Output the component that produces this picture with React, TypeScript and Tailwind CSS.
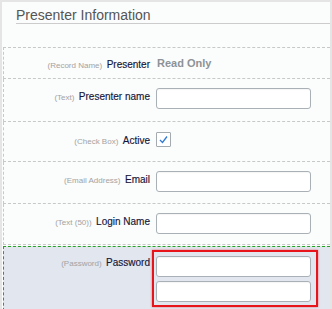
const font = { fontFamily: '"Liberation Sans", Arial, sans-serif' };

type Field = {
  kind: string;
  label: string;
  control: "readonly" | "text" | "check";
  rowClass: string;
};

const fields: Field[] = [
  { kind: "(Record Name)", label: "Presenter", control: "readonly", rowClass: "h-[32px] pt-[8px] border-t" },
  { kind: "(Text)", label: "Presenter name", control: "text", rowClass: "h-[43px] pt-[9px]" },
  { kind: "(Check Box)", label: "Active", control: "check", rowClass: "h-[40px] pt-[10px]" },
  { kind: "(Email Address)", label: "Email", control: "text", rowClass: "h-[42px] pt-[9px]" },
  { kind: "(Text (50))", label: "Login Name", control: "text", rowClass: "h-[41px] pt-[9px]" },
];

function Input() {
  return (
    <div className="h-[21px] w-[155px] rounded-[3px] border border-[#a9b1b6] bg-white shadow-[inset_0_1px_1px_rgba(0,0,0,0.04)]" />
  );
}

function Label({ kind, label }: { kind: string; label: string }) {
  return (
    <div className="w-[146px] shrink-0 text-right leading-[14px]">
      <span className="text-[8px] text-[#a3a3a3]">{kind}</span>{" "}
      <span className="text-[10px] text-[#15153a] [-webkit-text-stroke:0.15px_#15153a]">{label}</span>
    </div>
  );
}

function Row({ f }: { f: Field }) {
  return (
    <div className={`flex items-start border-b border-l border-dashed border-[#c8c8c8] ${f.rowClass}`}>
      <Label kind={f.kind} label={f.label} />
      <div className="ml-[6px]">
        {f.control === "readonly" && (
          <div className="pl-[1px] text-[11px] font-bold leading-[14px] text-[#8d9297]">Read Only</div>
        )}
        {f.control === "text" && <Input />}
        {f.control === "check" && (
          <div className="flex h-[15px] w-[15px] items-center justify-center rounded-[1px] border border-[#a4abb0] bg-white">
            <svg width="11" height="11" viewBox="0 0 11 11">
              <path d="M2 6 L4.5 8.5 L9 2.5" fill="none" stroke="#2f7bd6" strokeWidth="1.3" />
            </svg>
          </div>
        )}
      </div>
    </div>
  );
}

export default function App() {
  return (
    <div className="h-[309px] w-[332px] overflow-hidden bg-[#e5e5e5] px-[2px] pt-[2px]" style={font}>
      <div className="h-full w-full bg-[#fbfcfc]">
        <div className="ml-[14px] border-b border-[#cccccc] pt-[5px] text-[14px] leading-[16px] text-[#555555]">
          Presenter Information
        </div>
        <div className="mt-[23px] ml-[1px]">
          {fields.map((f, i) => (
            <Row key={i} f={f} />
          ))}
          <div className="mt-[1px] flex h-[70px] items-start border-t border-l border-dashed border-[#22a322] bg-[#e1e6ef] pt-[3px]">
            <div className="pt-[4px]">
              <Label kind="(Password)" label="Password" />
            </div>
            <div className="ml-[2px] flex flex-col gap-[4px] border-2 border-[#e8141c] pt-[4px] pb-[3px] pl-[2px] pr-[5px] shadow-[0_0_2px_rgba(232,20,28,0.6)]">
              <Input />
              <Input />
            </div>
          </div>
        </div>
      </div>
    </div>
  );
}
